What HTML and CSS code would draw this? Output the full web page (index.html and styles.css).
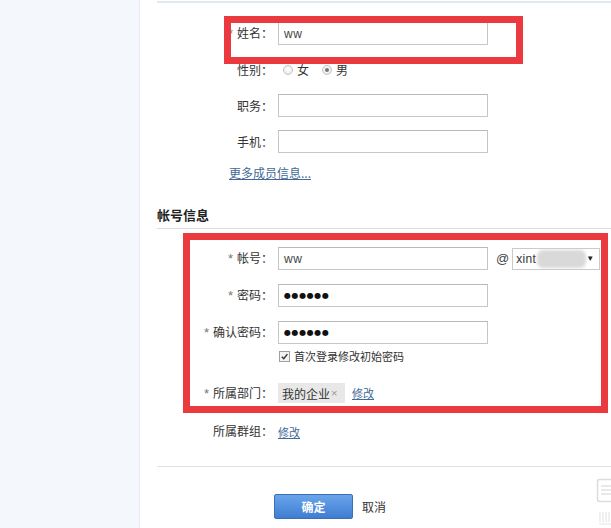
FILE: index.html
```html
<!DOCTYPE html>
<html lang="zh-CN">
<head>
<meta charset="utf-8">
<title>成员信息</title>
<link rel="stylesheet" href="styles.css">
</head>
<body>
<div class="page">
  <aside class="sidebar"></aside>
  <main class="main">
    <section class="basic">
      <div class="row r1">
        <span class="lbl"><span class="req">*</span>姓名：</span>
        <div class="field"><span class="val">ww</span></div>
      </div>
      <div class="row r2">
        <span class="lbl">性别：</span>
        <div class="radios">
          <span class="radio"></span><span class="opt">女</span>
          <span class="radio on"></span><span class="opt">男</span>
        </div>
      </div>
      <div class="row r2">
        <span class="lbl">职务：</span>
        <div class="field"></div>
      </div>
      <div class="row r3">
        <span class="lbl">手机：</span>
        <div class="field"></div>
      </div>
      <a class="more" href="#">更多成员信息...</a>
    </section>

    <h3 class="heading">帐号信息</h3>

    <section class="account">
      <div class="row a1">
        <span class="lbl"><span class="req">*</span>帐号：</span>
        <div class="acct">
          <div class="field"><span class="val">ww</span></div>
          <span class="at">@</span>
          <div class="select"><span class="dom">xint</span><span class="blur"></span><span class="arrow">▼</span></div>
        </div>
      </div>
      <div class="row a2">
        <span class="lbl"><span class="req">*</span>密码：</span>
        <div class="field"><span class="dots">●●●●●●</span></div>
      </div>
      <div class="row a2">
        <span class="lbl"><span class="req">*</span>确认密码：</span>
        <div class="field"><span class="dots">●●●●●●</span></div>
      </div>
      <div class="row chkrow">
        <span></span>
        <div class="chk"><span class="box"><svg viewBox="0 0 10 10" width="9" height="9"><path d="M2 5.2 L4.2 7.4 L8.2 2.4" fill="none" stroke="#333" stroke-width="1.6"/></svg></span><span>首次登录修改初始密码</span></div>
      </div>
      <div class="row dept">
        <span class="lbl"><span class="req">*</span>所属部门：</span>
        <div class="deptval"><span class="tag">我的企业<span class="x">×</span></span><a class="link" href="#">修改</a></div>
      </div>
      <div class="row group">
        <span class="lbl">所属群组：</span>
        <div><a class="link" href="#">修改</a></div>
      </div>
    </section>

    <div class="actions">
      <button class="ok" type="button">确定</button>
      <a class="cancel" href="#">取消</a>
    </div>
  </main>
</div>

<div class="mark mark1"></div>
<div class="mark mark2"></div>

<svg class="corner" width="18" height="52" viewBox="0 0 18 52">
  <rect x="1.5" y="1.5" width="20" height="22" rx="2" fill="none" stroke="#dcdcdc" stroke-width="1.5"/>
  <path d="M5 8 H18 M5 12 H18 M5 16 H18" stroke="#e2e2e2" stroke-width="1.5"/>
  <path d="M4 44 V34 M7 44 V34 M10 44 V34 M13 44 V34 M16 44 V34 M3 46 H18" stroke="#e6e6e6" stroke-width="1.2" fill="none"/>
</svg>
</body>
</html>
```

FILE: styles.css
```css
* { box-sizing: border-box; }

html, body {
  margin: 0;
  padding: 0;
  height: 100%;
  overflow: hidden;
  background: #fff;
}

body {
  position: relative;
  font-family: "Noto Sans CJK SC", "Liberation Sans", sans-serif;
  font-size: 12px;
  color: #333;
}

.page {
  display: flex;
  min-height: 528px;
}

.sidebar {
  width: 140px;
  flex: none;
  background: #f4f7fb;
  border-right: 1px solid #e6eaf0;
}

.main {
  flex: 1;
  padding: 1px 0 0 17px;
}

.basic {
  border-top: 2px solid #e1e8ef;
  display: flex;
  flex-direction: column;
}

.row {
  display: grid;
  grid-template-columns: 116px 1fr;
  column-gap: 5px;
  align-items: center;
  height: 23px;
}

.r1 { margin-top: 19px; }
.r2 { margin-top: 13px; }
.r3 { margin-top: 13px; }

.lbl {
  text-align: right;
  white-space: nowrap;
  line-height: 14px;
  color: #333;
}

.req {
  color: #777;
  font-family: "Liberation Sans", sans-serif;
  font-size: 13px;
  margin-right: 4px;
}

.field {
  flex: none;
  width: 210px;
  height: 23px;
  border: 1px solid #c6c6c6;
  border-top-color: #b9b9b9;
  background: #fff;
  display: flex;
  align-items: center;
  padding-left: 5px;
}

.val {
  font-family: "Liberation Sans", sans-serif;
  font-size: 12px;
  color: #444;
  letter-spacing: 0.5px;
}

.dots {
  font-family: "DejaVu Sans", sans-serif;
  font-size: 8px;
  letter-spacing: 0.6px;
  color: #111;
}

.radios {
  display: flex;
  align-items: center;
  padding-left: 5px;
}

.radio {
  width: 10px;
  height: 10px;
  border-radius: 50%;
  border: 1px solid #c4c4c4;
  background: radial-gradient(circle at 50% 40%, #fff 0, #e4e4e4 100%);
  position: relative;
  margin-right: 4px;
}

.radio.on::after {
  content: "";
  position: absolute;
  left: 2px;
  top: 2px;
  width: 4px;
  height: 4px;
  border-radius: 50%;
  background: #777;
}

.opt { margin-right: 13px; line-height: 14px; }

.more {
  margin: 13px 0 0 72px;
  line-height: 14px;
  height: 14px;
  color: #3f6a96;
  text-decoration: underline;
  align-self: flex-start;
}

.heading {
  margin: 25px 0 0 0;
  font-size: 13px;
  font-weight: bold;
  line-height: 20px;
  padding-bottom: 3px;
  border-bottom: 1px solid #dedede;
  color: #222;
}

.account {
  display: flex;
  flex-direction: column;
}

.a1 { margin-top: 18px; }
.a2 { margin-top: 14px; }

.acct {
  display: flex;
  align-items: center;
}

.at {
  flex: none;
  font-family: "Liberation Sans", sans-serif;
  font-size: 13px;
  color: #444;
  margin: 0 3px 0 8px;
}

.select {
  flex: none;
  width: 88px;
  height: 22px;
  border: 1px solid #cacaca;
  display: flex;
  align-items: center;
  padding: 0 5px 0 3px;
  font-family: "Liberation Sans", sans-serif;
  font-size: 12px;
  color: #333;
}

.dom { letter-spacing: 0.3px; }

.blur {
  width: 52px;
  height: 18px;
  margin-left: 1px;
  border-radius: 6px;
  background: #d9d9d9;
  filter: blur(1.5px);
}

.arrow {
  margin-left: auto;
  font-size: 8px;
  color: #222;
}

.chkrow {
  margin-top: 5px;
  height: 14px;
}

.chk {
  display: flex;
  align-items: center;
  padding-left: 1px;
  line-height: 14px;
  font-size: 11px;
}

.box {
  width: 11px;
  height: 11px;
  border: 1px solid #9f9f9f;
  background: #f2f2f2;
  display: flex;
  align-items: center;
  justify-content: center;
  margin-right: 4px;
}

.dept {
  margin-top: 20px;
  height: 20px;
}

.deptval {
  display: flex;
  align-items: center;
}

.tag {
  display: inline-flex;
  align-items: center;
  height: 20px;
  width: 67px;
  padding-left: 4px;
  background: #e8e8e8;
  color: #333;
  font-size: 12px;
}

.x {
  color: #999;
  font-family: "Liberation Sans", sans-serif;
  font-size: 11px;
  margin-left: 1px;
}

.link {
  color: #3f6a96;
  text-decoration: underline;
  font-size: 11px;
  margin-left: 7px;
}

.group {
  margin-top: 18px;
  height: 20px;
}

.group .link { margin-left: 0; }

.actions {
  margin-top: 25px;
  border-top: 1px solid #e2dfe6;
  padding: 27px 0 0 117px;
  display: flex;
  align-items: center;
}

.ok {
  width: 79px;
  height: 25px;
  border: 1px solid #3b70b9;
  border-radius: 2px;
  background: linear-gradient(#6aa4ea, #3f7dd2);
  color: #fff;
  font-family: "Noto Sans CJK SC", sans-serif;
  font-size: 12px;
  font-weight: bold;
  padding: 0;
}

.cancel {
  margin-left: 9px;
  color: #333;
  text-decoration: none;
}

.mark {
  position: absolute;
  border: 7px solid #ea3a40;
  pointer-events: none;
}

.mark1 { left: 224px; top: 16px; width: 299px; height: 48px; }
.mark2 { left: 183px; top: 233px; width: 425px; height: 180px; }

.corner {
  position: absolute;
  left: 596px;
  top: 478px;
}
```
